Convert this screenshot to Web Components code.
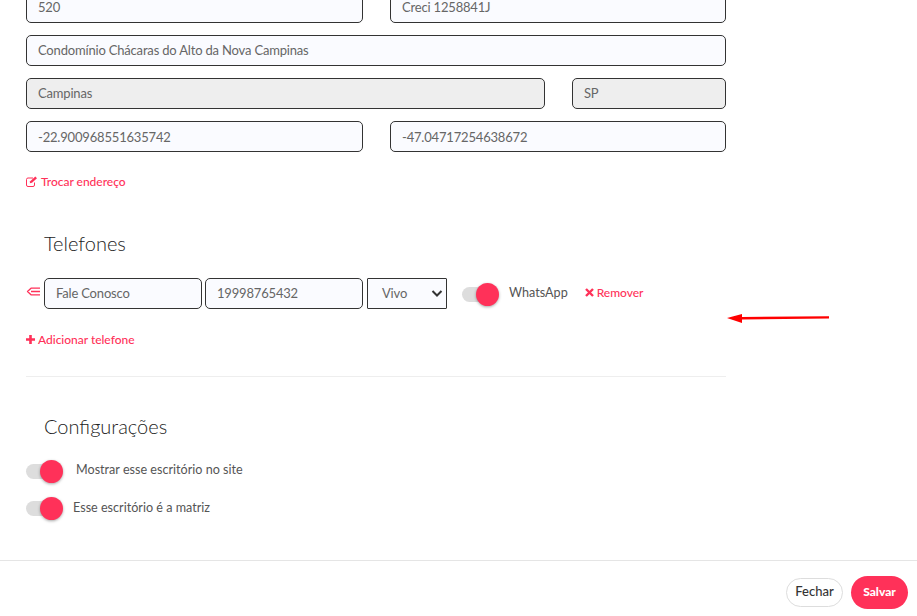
<!DOCTYPE html>
<html lang="pt-BR">
<head>
<meta charset="utf-8">
<title>Escritório</title>
<style>
  html, body { margin: 0; height: 100%; background: #fff; }
  body { font-family: Lato, "Open Sans", sans-serif; color: #555; overflow: hidden; }
</style>
</head>
<body>
<office-form></office-form>

<script>
const PINK = "#ff3159";

class FormField extends HTMLElement {
  constructor() {
    super();
    this.attachShadow({ mode: "open" });
    this.shadowRoot.innerHTML = `
      <style>
        :host { display: flex; align-items: center; box-sizing: border-box; height: 31px; padding: 0 11px 2px;
          border: 1px solid #333; border-radius: 5px; background: #fafbff; font-size: 13px; letter-spacing: -.18px; color: #666; white-space: nowrap; }
        :host([disabled]) { background: #eee; }
      </style>
      <slot></slot>
    `;
  }
}
customElements.define("form-field", FormField);

class SelectField extends HTMLElement {
  constructor() {
    super();
    this.attachShadow({ mode: "open" });
    this.shadowRoot.innerHTML = `
      <style>
        :host { display: flex; align-items: center; justify-content: space-between; box-sizing: border-box; height: 31px;
          padding: 0 2px 2px 14px; border: 1px solid #333; border-radius: 1px; background: #fafbff; font-size: 13px; letter-spacing: -.18px; color: #666; }
        svg { width: 14px; height: 14px; }
      </style>
      <slot></slot>
      <svg viewBox="0 0 14 14"><path d="M2.5 5 7 9.5 11.5 5" fill="none" stroke="#333" stroke-width="2"/></svg>
    `;
  }
}
customElements.define("select-field", SelectField);

class ToggleSwitch extends HTMLElement {
  constructor() {
    super();
    this.attachShadow({ mode: "open" });
    this.shadowRoot.innerHTML = `
      <style>
        :host { display: block; position: relative; width: 37px; height: 23px; flex: none; }
        .track { position: absolute; left: 0; top: 4px; width: 34px; height: 15px; border-radius: 8px; background: #ddd; }
        .knob { position: absolute; right: 0; top: 0; width: 23px; height: 23px; border-radius: 50%; background: ${PINK};
          box-shadow: 0 1px 3px rgba(0,0,0,.35); }
      </style>
      <div class="track"></div>
      <div class="knob"></div>
    `;
  }
}
customElements.define("toggle-switch", ToggleSwitch);

class ActionLink extends HTMLElement {
  constructor() {
    super();
    this.attachShadow({ mode: "open" });
    this.shadowRoot.innerHTML = `
      <style>
        :host { display: inline-flex; align-items: center; gap: 3px; font-size: 12px; font-weight: 500; letter-spacing: -.02px; color: ${PINK}; white-space: nowrap; }
        ::slotted(svg) { display: block; flex: none; }
      </style>
      <slot name="icon"></slot>
      <slot></slot>
    `;
  }
}
customElements.define("action-link", ActionLink);

class SectionTitle extends HTMLElement {
  constructor() {
    super();
    this.attachShadow({ mode: "open" });
    this.shadowRoot.innerHTML = `
      <style>
        :host { display: block; padding-left: 18px; font-size: 20px; font-weight: 300; line-height: 24px; color: #222; }
      </style>
      <slot></slot>
    `;
  }
}
customElements.define("section-title", SectionTitle);

class PillButton extends HTMLElement {
  constructor() {
    super();
    this.attachShadow({ mode: "open" });
    this.shadowRoot.innerHTML = `
      <style>
        :host { display: flex; align-items: center; justify-content: center; box-sizing: border-box; width: 57px; height: 29px; padding-bottom: 2px;
          border: 1px solid #ddd; border-radius: 15px; background: #fff; font-size: 13px; font-weight: 500; color: #333; }
        :host([primary]) { height: 33px; border: 0; border-radius: 17px; background: ${PINK}; color: #fff; font-size: 12px; font-weight: 900; }
      </style>
      <slot></slot>
    `;
  }
}
customElements.define("pill-button", PillButton);

class OfficeForm extends HTMLElement {
  constructor() {
    super();
    this.attachShadow({ mode: "open" });
    this.shadowRoot.innerHTML = `
      <style>
        :host { display: flex; flex-direction: column; position: relative; height: 616px; overflow: hidden; }
        main { flex: 1; min-height: 0; width: 700px; margin: -8px 0 0 26px; }
        .fields { display: flex; flex-direction: column; gap: 12px; margin-top: 0; }
        .row { display: grid; gap: 27px; }
        .half { grid-template-columns: 337px 336px; }
        .city { grid-template-columns: 519px 154px; }
        .coords form-field { padding-bottom: 0; }
        .trocar { margin-top: 21px; height: 16px; display: flex; }
        section-title.phones { margin-top: 42px; }
        .phone { display: flex; align-items: center; margin-top: 23px; height: 31px; }
        .phone > svg { margin-top: -4px; flex: none; }
        .phone form-field:nth-of-type(1) { width: 158px; margin-left: 3px; }
        .phone form-field:nth-of-type(2) { width: 158px; margin-left: 3px; }
        .phone select-field { width: 80px; margin-left: 4px; }
        .phone toggle-switch { margin-left: 15px; margin-top: 1px; }
        .phone .label { margin-left: 10px; font-size: 12.6px; color: #555; margin-top: -3px; }
        .phone action-link { margin-left: 17px; margin-top: -2px; }
        .add { margin-top: 22px; height: 16px; display: flex; }
        hr { margin: 29px 0 0; border: 0; border-top: 1px solid #eee; }
        section-title.config { margin-top: 37px; }
        .opt { display: flex; align-items: center; height: 23px; font-size: 12.6px; color: #555; }
        .opt span { margin-top: -3px; }
        .opt.one span { margin-top: -5px; }
        .opt.one { margin-top: 22px; gap: 13px; }
        .opt.two { margin-top: 14px; gap: 10px; }
        footer { display: flex; align-items: center; justify-content: flex-end; gap: 8px; height: 56px; padding: 7px 9px 0 0;
          box-sizing: border-box; border-top: 1px solid #e5e5e5; flex: none; }
        .arrow { position: absolute; left: 725px; top: 312px; }
      </style>
      <main>
        <div class="fields">
          <div class="row half"><form-field>520</form-field><form-field>Creci 1258841J</form-field></div>
          <form-field>Condomínio Chácaras do Alto da Nova Campinas</form-field>
          <div class="row city"><form-field disabled>Campinas</form-field><form-field disabled>SP</form-field></div>
          <div class="row half coords"><form-field>-22.900968551635742</form-field><form-field>-47.04717254638672</form-field></div>
        </div>
        <div class="trocar">
          <action-link>
            <svg slot="icon" width="12" height="11" viewBox="0 0 12 11" fill="none" stroke="${PINK}">
              <path d="M8.5 6.5V9a1.5 1.5 0 0 1-1.5 1.5H2A1.5 1.5 0 0 1 .5 9V3.5A1.5 1.5 0 0 1 2 2h5" stroke-width="1"/>
              <path d="M3.8 7.2 4.2 5.2 9.3.6 11 2.3 6 6.8Z" fill="${PINK}" stroke="none"/>
            </svg>
            Trocar endereço
          </action-link>
        </div>
        <section-title class="phones">Telefones</section-title>
        <div class="phone">
          <svg width="15" height="10" viewBox="0 0 15 10" fill="none" stroke="${PINK}" stroke-width="1.3" stroke-linejoin="round">
            <path d="M14 1.2H5L1.5 4.5 5 7.8H14M5 4.5h9"/>
          </svg>
          <form-field>Fale Conosco</form-field>
          <form-field>19998765432</form-field>
          <select-field>Vivo</select-field>
          <toggle-switch></toggle-switch>
          <span class="label">WhatsApp</span>
          <action-link>
            <svg slot="icon" width="9" height="9" viewBox="0 0 9 9" stroke="${PINK}" stroke-width="2.4"><path d="M1 1l7 7M8 1 1 8"/></svg>
            Remover
          </action-link>
        </div>
        <div class="add">
          <action-link>
            <svg slot="icon" width="9" height="9" viewBox="0 0 9 9" stroke="${PINK}" stroke-width="2.6"><path d="M4.5 0v9M0 4.5h9"/></svg>
            Adicionar telefone
          </action-link>
        </div>
        <hr>
        <section-title class="config">Configurações</section-title>
        <div class="opt one"><toggle-switch></toggle-switch><span>Mostrar esse escritório no site</span></div>
        <div class="opt two"><toggle-switch></toggle-switch><span>Esse escritório é a matriz</span></div>
      </main>
      <footer>
        <pill-button>Fechar</pill-button>
        <pill-button primary>Salvar</pill-button>
      </footer>
      <svg class="arrow" width="106" height="12" viewBox="0 0 106 12" fill="#f00">
        <path d="M2 6 17 2V5L104 4.2V6.6L17 7.6V11Z"/>
      </svg>
    `;
  }
}
customElements.define("office-form", OfficeForm);
</script>
</body>
</html>
